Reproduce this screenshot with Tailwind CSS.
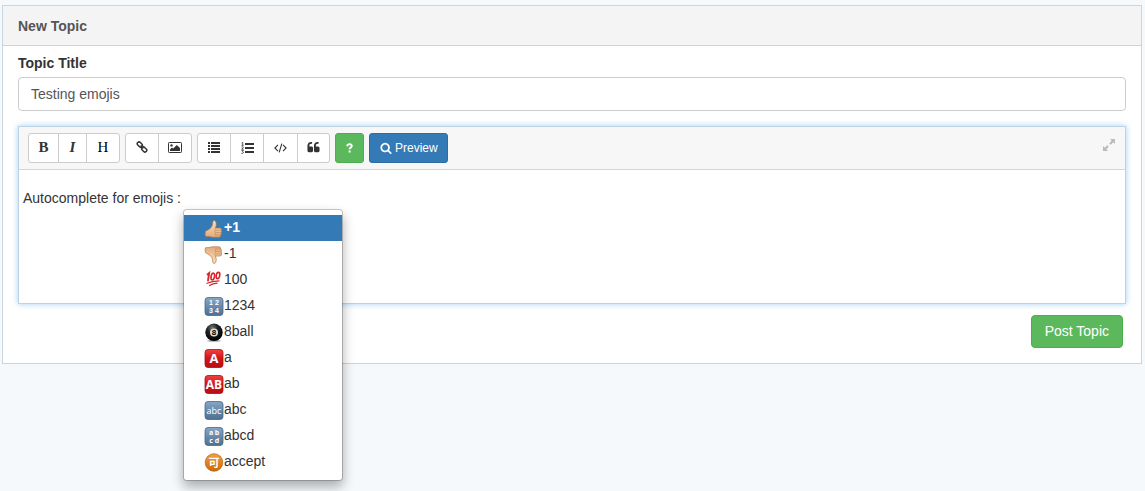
<!DOCTYPE html>
<html lang="en">
<head>
    <meta charset="UTF-8">
    <meta name="viewport" content="width=device-width, initial-scale=1.0">
    <title>New Topic</title>
    <script src="https://cdn.jsdelivr.net/npm/@tailwindcss/browser@4"></script>
</head>
<body class="min-h-screen bg-[#f5f9fc] pl-[2px] pr-[3px] pt-[5px] font-['Liberation_Sans',Arial,sans-serif] text-sm text-[#333]">
    <!-- shared gradients and shapes for the emoji list -->
    <svg width="0" height="0" class="absolute" aria-hidden="true">
        <defs>
            <linearGradient id="skin" x1="0" y1="0" x2="0" y2="1">
                <stop offset="0" stop-color="#fde2bb"/>
                <stop offset="1" stop-color="#e2ab7c"/>
            </linearGradient>
            <linearGradient id="blue" x1="0" y1="0" x2="0" y2="1">
                <stop offset="0" stop-color="#86a5c6"/>
                <stop offset="1" stop-color="#4d6f93"/>
            </linearGradient>
            <linearGradient id="red" x1="0" y1="0" x2="0" y2="1">
                <stop offset="0" stop-color="#f0433f"/>
                <stop offset="0.5" stop-color="#d0161b"/>
                <stop offset="1" stop-color="#b80d14"/>
            </linearGradient>
            <linearGradient id="orange" x1="0" y1="0" x2="0" y2="1">
                <stop offset="0" stop-color="#f0a040"/>
                <stop offset="1" stop-color="#c9690c"/>
            </linearGradient>
            <radialGradient id="ball" cx="0.4" cy="0.25" r="0.75">
                <stop offset="0" stop-color="#777"/>
                <stop offset="0.4" stop-color="#222"/>
                <stop offset="1" stop-color="#000"/>
            </radialGradient>
            <g id="thumb">
                <path d="M1.500 11.500Q2 10.500 3.500 10.200Q6 9.200 7.800 6.500Q8.800 4.500 8.800 2Q9 .500 10.300 .500Q12 .800 12.200 3.500Q12.300 6 11.500 8H16Q17.800 8.300 17.400 9.900Q18.200 11.100 17.200 12.400Q17.900 13.900 16.700 15Q16.900 16.700 15.200 17.200H9.500Q7 17.300 5.500 16.500Q3.500 16.800 1.500 16.200Q.600 14 1.500 11.500Z" fill="url(#skin)" stroke="#b0764c" stroke-width=".7"/>
                <path d="M11.800 10.200H17M11.800 12.600H17M11.800 15H16.500M11.500 8Q10.300 9.300 11.300 10.400Q10.500 11.500 11.500 12.700Q10.700 13.900 11.700 15.200" fill="none" stroke="#c08a5e" stroke-width=".7"/>
            </g>
        </defs>
    </svg>

    <main class="border border-[#c9d5df] bg-white">
        <h1 class="border-b border-[#c9d5df] bg-[#f4f4f4] px-[15px] pt-[11px] pb-[9px] leading-[19px] font-bold text-[#555]">New Topic</h1>

        <form class="px-[15px] pt-[7px] pb-[15px]">
            <label for="title" class="block pb-[4px] leading-5 font-bold">Topic Title</label>
            <input id="title" type="text" value="Testing emojis" class="block h-[34px] w-full rounded border border-[#ccc] bg-white px-3 text-[#555] outline-none">

            <div class="relative mt-[15px] border border-[#bcd3e5] shadow-[0_0_6px_rgba(102,175,233,0.6)]">
                <div class="flex items-center gap-[5px] border-b border-[#cdd8e0] bg-[#f7f7f7] px-[9px] py-[6px] text-xs">
                    <div class="flex h-[30px] divide-x divide-[#ccc] overflow-hidden rounded-[3px] border border-[#ccc] bg-white font-['Liberation_Serif',serif] text-[15px]">
                        <button type="button" aria-label="Bold" class="w-[30px] font-bold">B</button>
                        <button type="button" aria-label="Italic" class="w-7 font-bold italic">I</button>
                        <button type="button" aria-label="Heading" class="w-8 text-black">H</button>
                    </div>
                    <div class="flex h-[30px] divide-x divide-[#ccc] overflow-hidden rounded-[3px] border border-[#ccc] bg-white">
                        <button type="button" aria-label="Link" class="flex w-[33px] items-center justify-center pb-[2px]">
                            <svg width="12" height="12" viewBox="0 0 12 12" fill="none" stroke="#333" stroke-width="1.5">
                                <rect x="1" y="1.700" width="5.600" height="3.600" rx="1.700" transform="rotate(45 3.800 3.500)"/>
                                <rect x="5.400" y="6.700" width="5.600" height="3.600" rx="1.700" transform="rotate(45 8.200 8.500)"/>
                                <path d="M4.600 4.600 7.400 7.400"/>
                            </svg>
                        </button>
                        <button type="button" aria-label="Image" class="flex w-8 items-center justify-center pb-[2px]">
                            <svg width="14" height="11" viewBox="0 0 14 11">
                                <rect x=".5" y=".5" width="13" height="10" rx=".8" fill="none" stroke="#333"/>
                                <circle cx="3.500" cy="3.400" r="1.200" fill="#333"/>
                                <path d="M2 9V7.400L4 5.400 5.200 6.600 8.800 3 12 6V9Z" fill="#333"/>
                            </svg>
                        </button>
                    </div>
                    <div class="flex h-[30px] divide-x divide-[#ccc] overflow-hidden rounded-[3px] border border-[#ccc] bg-white">
                        <button type="button" aria-label="Unordered list" class="flex w-[33px] items-center justify-center pb-[2px]">
                            <svg width="12" height="11" viewBox="0 0 12 11" fill="#333" shape-rendering="crispEdges">
                                <path d="M0 0h2v2H0zM3 0h9v2H3zM0 3h2v2H0zM3 3h9v2H3zM0 6h2v2H0zM3 6h9v2H3zM0 9h2v2H0zM3 9h9v2H3z"/>
                            </svg>
                        </button>
                        <button type="button" aria-label="Ordered list" class="flex w-[33px] items-center justify-center">
                            <svg width="13" height="12" viewBox="0 0 13 12" fill="#333">
                                <path d="M4 1h9v2H4zM4 5h9v2H4zM4 9h9v2H4z"/>
                                <path d="M.600.900 1.700.200V3.200M.500 3.300H2.700M.500 5Q2.400 4.100 2.300 5.500L.700 7.300H2.700M.500 8.500H2.400L1.500 9.700Q2.700 9.800 2.300 10.900Q1.600 11.900.400 11.300" fill="none" stroke="#333" stroke-width=".8"/>
                            </svg>
                        </button>
                        <button type="button" aria-label="Code" class="flex w-[34px] items-center justify-center">
                            <svg width="13" height="10" viewBox="0 0 13 10" fill="none" stroke="#333" stroke-width="1.100">
                                <path d="M4 1.800.900 5 4 8.200M9 1.800 12.100 5 9 8.200M7.800.700 5.200 9.300"/>
                            </svg>
                        </button>
                        <button type="button" aria-label="Quote" class="flex w-[31px] items-center justify-center pb-[2px]">
                            <svg width="13" height="13" viewBox="0 0 1792 1792" fill="#333">
                                <path d="M832 960v384q0 80-56 136t-136 56h-384q-80 0-136-56t-56-136v-704q0-104 40.5-198.5t109.5-163.5 163.5-109.5 198.5-40.5h64q26 0 45 19t19 45v128q0 26-19 45t-45 19h-64q-106 0-181 75t-75 181v32q0 40 28 68t68 28h224q80 0 136 56t56 136zm896 0v384q0 80-56 136t-136 56h-384q-80 0-136-56t-56-136v-704q0-104 40.5-198.5t109.5-163.5 163.5-109.5 198.5-40.5h64q26 0 45 19t19 45v128q0 26-19 45t-45 19h-64q-106 0-181 75t-75 181v32q0 40 28 68t68 28h224q80 0 136 56t56 136z"/>
                            </svg>
                        </button>
                    </div>
                    <button type="button" aria-label="Help" class="flex h-[30px] w-[29px] items-center justify-center rounded-[3px] border border-[#4cae4c] bg-[#5cb85c]">
                        <svg width="7" height="10" viewBox="0 0 7 10">
                            <path d="M1.100 3.200Q1.500 1.100 3.500 1.100Q5.800 1.200 5.800 3Q5.700 4.200 4.400 4.800Q3.600 5.200 3.600 6.300" fill="none" stroke="#fff" stroke-width="1.900"/>
                            <path d="M2.600 7.500h2v2h-2z" fill="#fff"/>
                        </svg>
                    </button>
                    <button type="button" class="flex h-[30px] items-center gap-[3px] rounded-[3px] border border-[#2e6da4] bg-[#337ab7] pr-[9px] pl-[10px] text-white">
                        <svg width="12" height="12" viewBox="0 0 1792 1792" fill="#fff" aria-hidden="true">
                            <path d="M1216 832q0-185-131.5-316.5t-316.5-131.5-316.5 131.5-131.5 316.5 131.5 316.5 316.5 131.5 316.5-131.5 131.5-316.5zm512 832q0 52-38 90t-90 38q-54 0-90-38l-343-342q-179 124-399 124-143 0-273.500-55.500t-225-150-150-225-55.500-273.500 55.500-273.500 150-225 225-150 273.500-55.500 273.500 55.500 225 150 150 225 55.500 273.500q0 220-124 399l343 343q37 37 37 90z"/>
                        </svg>
                        Preview
                    </button>
                    <button type="button" aria-label="Fullscreen" class="mr-px mb-[6px] ml-auto">
                        <svg width="12" height="12" viewBox="0 0 12 12" fill="#bbb">
                            <path d="M7 0H12V5L10.300 3.300 7.800 5.800 6.200 4.200 8.700 1.700ZM0 7 1.700 8.700 4.200 6.200 5.800 7.800 3.300 10.300 5 12H0Z"/>
                        </svg>
                    </button>
                </div>

                <textarea aria-label="Topic content" class="block h-[133px] w-full resize-none bg-white px-[4px] pt-[18px] leading-5 outline-none">Autocomplete for emojis :</textarea>

                <ul role="listbox" aria-label="Emojis" class="absolute top-[82px] left-[164px] w-[160px] rounded border border-black/20 bg-white bg-clip-padding py-[5px] leading-6 shadow-[0_6px_12px_rgba(0,0,0,0.3)]">
                    <li role="option" aria-selected="true" class="flex h-[26px] items-center bg-[#337ab7] pb-[2px] pl-5 font-bold text-white">
                        <svg width="20" height="18" viewBox="0 0 20 18" class="mt-[3px]"><use href="#thumb"/></svg>+1
                    </li>
                    <li role="option" class="flex h-[26px] items-center pb-[2px] pl-5">
                        <svg width="20" height="18" viewBox="0 0 20 18" class="mt-[3px]"><use href="#thumb" transform="matrix(1 0 0 -1 0 18)"/></svg>-1
                    </li>
                    <li role="option" class="flex h-[26px] items-center pb-[2px] pl-5">
                        <svg width="20" height="18" viewBox="0 0 20 18" fill="none" stroke="#d8232a" stroke-linecap="round">
                            <path d="M3.500 4.500 5.200 3 4 10.500" stroke-width="1.800"/>
                            <ellipse cx="8.800" cy="6.500" rx="1.700" ry="3.400" transform="rotate(12 8.800 6.500)" stroke-width="1.600"/>
                            <ellipse cx="14" cy="5.500" rx="1.700" ry="3.200" transform="rotate(12 14 5.500)" stroke-width="1.600"/>
                            <path d="M3 13.300Q8 11 15 10.800M5.500 15.500Q9 13.500 13 13.200" stroke-width="1.200"/>
                        </svg>100
                    </li>
                    <li role="option" class="flex h-[26px] items-center pb-[2px] pl-5">
                        <svg width="20" height="20" viewBox="0 0 20 20" class="mt-[3px]" font-family="Liberation Sans, sans-serif" font-size="7" font-weight="bold" fill="#fff" text-anchor="middle">
                            <rect x="1" y=".5" width="18" height="18" rx="3" fill="url(#blue)" stroke="#48688a" stroke-width=".8"/>
                            <text x="7" y="8">1</text><text x="13" y="8">2</text>
                            <text x="7" y="16">3</text><text x="13" y="16">4</text>
                        </svg>1234
                    </li>
                    <li role="option" class="flex h-[26px] items-center pb-[2px] pl-5">
                        <svg width="20" height="20" viewBox="0 0 20 20" class="mt-[3px]">
                            <ellipse cx="10" cy="17.800" rx="7" ry="1.300" fill="#bbb"/>
                            <circle cx="10" cy="9.300" r="8.700" fill="url(#ball)"/>
                            <circle cx="10" cy="9.500" r="4" fill="#ddd"/>
                            <text x="10" y="12.300" font-family="Liberation Sans, sans-serif" font-size="8" font-weight="bold" text-anchor="middle">8</text>
                        </svg>8ball
                    </li>
                    <li role="option" class="flex h-[26px] items-center pb-[2px] pl-5">
                        <svg width="20" height="20" viewBox="0 0 20 20" class="mt-[3px]">
                            <rect x="1" y=".5" width="18" height="18" rx="3" fill="url(#red)" stroke="#a81015" stroke-width=".8"/>
                            <text x="10" y="14" font-family="Open Sans, sans-serif" font-size="13" font-weight="bold" fill="#fff" text-anchor="middle">A</text>
                        </svg>a
                    </li>
                    <li role="option" class="flex h-[26px] items-center pb-[2px] pl-5">
                        <svg width="20" height="20" viewBox="0 0 20 20" class="mt-[3px]">
                            <rect x="1" y=".5" width="18" height="18" rx="3" fill="url(#red)" stroke="#a81015" stroke-width=".8"/>
                            <text x="10" y="14" font-family="Open Sans, sans-serif" font-size="12" font-weight="bold" fill="#fff" text-anchor="middle">AB</text>
                        </svg>ab
                    </li>
                    <li role="option" class="flex h-[26px] items-center pb-[2px] pl-5">
                        <svg width="20" height="20" viewBox="0 0 20 20" class="mt-[3px]">
                            <rect x="1" y=".5" width="18" height="18" rx="3" fill="url(#blue)" stroke="#48688a" stroke-width=".8"/>
                            <text x="10" y="12.500" font-family="Open Sans, sans-serif" font-size="9" fill="#fff" text-anchor="middle">abc</text>
                        </svg>abc
                    </li>
                    <li role="option" class="flex h-[26px] items-center pb-[2px] pl-5">
                        <svg width="20" height="20" viewBox="0 0 20 20" class="mt-[3px]" font-family="Open Sans, sans-serif" font-size="7" font-weight="bold" fill="#fff" text-anchor="middle">
                            <rect x="1" y=".5" width="18" height="18" rx="3" fill="url(#blue)" stroke="#48688a" stroke-width=".8"/>
                            <text x="7" y="8">a</text><text x="13" y="8">b</text>
                            <text x="7" y="16">c</text><text x="13" y="16">d</text>
                        </svg>abcd
                    </li>
                    <li role="option" class="flex h-[26px] items-center pb-[2px] pl-5">
                        <svg width="20" height="20" viewBox="0 0 20 20" class="mt-[3px]">
                            <circle cx="10" cy="9.500" r="8.800" fill="url(#orange)" stroke="#b5600d" stroke-width=".7"/>
                            <text x="10" y="13.500" font-family="Noto Sans CJK JP, sans-serif" font-size="11" font-weight="bold" fill="#fff" text-anchor="middle">可</text>
                        </svg>accept
                    </li>
                </ul>
            </div>

            <div class="mt-[11px] flex justify-end pr-[3px]">
                <button type="submit" class="h-[33px] rounded border border-[#4cae4c] bg-[#5cb85c] px-[13px] pb-[2px] text-white">Post Topic</button>
            </div>
        </form>
    </main>
</body>
</html>
